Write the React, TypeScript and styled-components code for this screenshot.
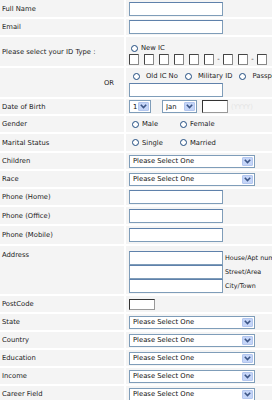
import styled, { createGlobalStyle } from 'styled-components';

const CELL_BG = '#f4f4f4';
const INPUT_BORDER = '#7f9db9';
const RADIO_RING = '#1f4b80';

const GlobalStyle = createGlobalStyle`
  html, body {
    margin: 0;
    padding: 0;
    background: #fff;
    overflow: hidden;
  }
  body {
    font-family: "DejaVu Sans", Verdana, sans-serif;
    font-size: 6.8px;
    color: #222;
  }
`;

const SELECT_ROWS = ['Children', 'Race'];
const PHONE_ROWS = ['Phone (Home)', 'Phone (Office)', 'Phone (Mobile)'];
const LOWER_SELECTS = ['State', 'Country', 'Education', 'Income', 'Career Field'];
const ADDRESS_PARTS = ['House/Apt num', 'Street/Area', 'City/Town'];

const Chevron = () => (
  <svg width='7' height='5' viewBox='0 0 7 5'>
    <path d='M0.8 0.8 L3.5 3.6 L6.2 0.8' fill='none' stroke='#3d5686' strokeWidth='1.6' />
  </svg>
);

const SelectBox = ({ width, value }: { width: number; value: string }) => (
  <StyledSelectWrap style={{ width }}>
    <StyledSelect defaultValue={value}>
      <option>{value}</option>
    </StyledSelect>
    <StyledArrow>
      <Chevron />
    </StyledArrow>
  </StyledSelectWrap>
);

const Radio = ({ label, $w, $gap }: { label: string; $w?: number; $gap?: number }) => (
  <StyledOption $w={$w} $gap={$gap}>
    <StyledRing />
    <span>{label}</span>
  </StyledOption>
);

export default function App() {
  return (
    <>
      <GlobalStyle />
      <StyledForm>
        <StyledRow $h={17}>
          <StyledLabel>Full Name</StyledLabel>
          <StyledField>
            <StyledInput type='text' />
          </StyledField>
        </StyledRow>
        <StyledRow $h={16}>
          <StyledLabel>Email</StyledLabel>
          <StyledField>
            <StyledInput type='text' />
          </StyledField>
        </StyledRow>
        <StyledRow $h={29}>
          <StyledLabel>Please select your ID Type :</StyledLabel>
          <StyledStack $top={7} $gap={2}>
            <StyledRadioLine $indent={2}>
              <Radio label='New IC' />
            </StyledRadioLine>
            <StyledBoxes>
              <StyledBoxGroup>
                {Array.from({ length: 6 }).map((_, i) => (
                  <StyledDigit key={i} />
                ))}
              </StyledBoxGroup>
              <StyledDash>-</StyledDash>
              <StyledBoxGroup>
                <StyledDigit />
                <StyledDigit />
              </StyledBoxGroup>
              <StyledDash>-</StyledDash>
              <StyledBoxGroup>
                <StyledDigit />
                <StyledDigit />
                <StyledDigit />
                <StyledDigit />
              </StyledBoxGroup>
            </StyledBoxes>
          </StyledStack>
        </StyledRow>
        <StyledRow $h={29}>
          <StyledLabel $right>OR</StyledLabel>
          <StyledStack $top={4} $gap={3}>
            <StyledRadioLine $indent={4} $gap={7}>
              <Radio label='Old IC No' $gap={6} />
              <Radio label='Military ID' $gap={6} />
              <Radio label='Passport' $gap={6} />
            </StyledRadioLine>
            <StyledInput type='text' />
          </StyledStack>
        </StyledRow>
        <StyledRow $h={15}>
          <StyledLabel>Date of Birth</StyledLabel>
          <StyledField $gap={11}>
            <SelectBox width={22} value='1' />
            <StyledDobGroup>
              <SelectBox width={35} value='Jan' />
              <StyledYear type='text' />
              <StyledHint>(YYYY)</StyledHint>
            </StyledDobGroup>
          </StyledField>
        </StyledRow>
        <StyledRow $h={16}>
          <StyledLabel>Gender</StyledLabel>
          <StyledRadioLine $indent={6} $cell>
            <Radio label='Male' $w={48} />
            <Radio label='Female' $w={48} />
          </StyledRadioLine>
        </StyledRow>
        <StyledRow $h={17}>
          <StyledLabel>Marital Status</StyledLabel>
          <StyledRadioLine $indent={6} $cell>
            <Radio label='Single' $w={48} />
            <Radio label='Married' $w={48} />
          </StyledRadioLine>
        </StyledRow>
        {SELECT_ROWS.map(name => (
          <StyledRow key={name} $h={16}>
            <StyledLabel>{name}</StyledLabel>
            <StyledField>
              <SelectBox width={126} value='Please Select One' />
            </StyledField>
          </StyledRow>
        ))}
        {PHONE_ROWS.map((name, i) => (
          <StyledRow key={name} $h={16 + i}>
            <StyledLabel>{name}</StyledLabel>
            <StyledField>
              <StyledInput type='text' />
            </StyledField>
          </StyledRow>
        ))}
        <StyledRow $h={48}>
          <StyledLabel $top>Address</StyledLabel>
          <StyledStack $top={5} $gap={0}>
            {ADDRESS_PARTS.map(part => (
              <StyledAddressLine key={part}>
                <StyledInput type='text' />
                <span>{part}</span>
              </StyledAddressLine>
            ))}
          </StyledStack>
        </StyledRow>
        <StyledRow $h={16}>
          <StyledLabel>PostCode</StyledLabel>
          <StyledField>
            <StyledPostCode type='text' />
          </StyledField>
        </StyledRow>
        {LOWER_SELECTS.map(name => (
          <StyledRow key={name} $h={16}>
            <StyledLabel>{name}</StyledLabel>
            <StyledField>
              <SelectBox width={126} value='Please Select One' />
            </StyledField>
          </StyledRow>
        ))}
      </StyledForm>
    </>
  );
}

const StyledForm = styled.div`
  width: 330px;
  display: flex;
  flex-direction: column;
  gap: 2px;
`;

const StyledRow = styled.div<{ $h: number }>`
  height: ${props => props.$h}px;
  display: grid;
  grid-template-columns: 124px 1fr;
  column-gap: 2px;
`;

const StyledLabel = styled.div<{ $top?: boolean; $right?: boolean }>`
  background: ${CELL_BG};
  display: flex;
  align-items: ${props => (props.$top ? 'flex-start' : 'center')};
  justify-content: ${props => (props.$right ? 'flex-end' : 'flex-start')};
  padding: ${props => (props.$top ? '5px' : '0')} ${props => (props.$right ? '10px' : '2px')} 0 2px;
  white-space: nowrap;
`;

const StyledField = styled.div<{ $gap?: number }>`
  background: ${CELL_BG};
  display: flex;
  align-items: center;
  gap: ${props => props.$gap ?? 0}px;
  padding-left: 3px;
`;

const StyledStack = styled.div<{ $top: number; $gap: number }>`
  background: ${CELL_BG};
  display: flex;
  flex-direction: column;
  align-items: flex-start;
  gap: ${props => props.$gap}px;
  padding: ${props => props.$top}px 0 0 3px;
`;

const StyledInput = styled.input`
  box-sizing: border-box;
  width: 94px;
  height: 14px;
  margin: 0;
  padding: 0 2px;
  border: 1px solid ${INPUT_BORDER};
  border-top-color: #5f81ab;
  background: #fff;
  font: inherit;
  outline: none;
`;

const StyledPostCode = styled.input`
  box-sizing: border-box;
  width: 26px;
  height: 11px;
  margin: 0;
  padding: 0;
  border: 1px solid #333;
  border-right-color: #999;
  border-bottom-color: #999;
  background: #fff;
  outline: none;
`;

const StyledYear = styled(StyledPostCode)`
  height: 13px;
  margin-left: 5px;
`;

const StyledHint = styled.span`
  color: #e4e4e4;
  margin-left: 3px;
`;

const StyledDobGroup = styled.div`
  display: flex;
  align-items: center;
`;

const StyledSelectWrap = styled.div`
  box-sizing: border-box;
  height: 13px;
  display: flex;
  align-items: center;
  border: 1px solid ${INPUT_BORDER};
  background: #fff;
  padding-right: 1px;
`;

const StyledSelect = styled.select`
  appearance: none;
  flex: 1;
  min-width: 0;
  height: 100%;
  border: none;
  margin: 0;
  padding: 0 0 0 3px;
  background: transparent;
  font: inherit;
  color: #111;
  outline: none;
`;

const StyledArrow = styled.span`
  box-sizing: border-box;
  width: 11px;
  height: 9px;
  display: grid;
  place-items: center;
  background: #c5d5f8;
  border: 1px solid #b3c6ee;
  border-radius: 1px;
`;

const StyledRadioLine = styled.div<{ $indent?: number; $gap?: number; $cell?: boolean }>`
  background: ${props => (props.$cell ? CELL_BG : 'transparent')};
  display: flex;
  align-items: center;
  gap: ${props => props.$gap ?? 0}px;
  padding-left: ${props => props.$indent ?? 0}px;
`;

const StyledOption = styled.label<{ $w?: number; $gap?: number }>`
  display: flex;
  align-items: center;
  gap: ${props => props.$gap ?? 3}px;
  width: ${props => (props.$w ? `${props.$w}px` : 'auto')};
  white-space: nowrap;
`;

const StyledRing = styled.span`
  box-sizing: border-box;
  width: 7px;
  height: 7px;
  border-radius: 50%;
  border: 1.3px solid ${RADIO_RING};
  background: #fff;
`;

const StyledBoxes = styled.div`
  display: flex;
  align-items: center;
`;

const StyledBoxGroup = styled.div`
  display: flex;
  gap: 5px;
`;

const StyledDigit = styled.span`
  box-sizing: border-box;
  width: 10px;
  height: 11px;
  border: 1px solid #444;
  border-right-color: #888;
  border-bottom-color: #888;
  border-radius: 1px;
  background: #fff;
`;

const StyledDash = styled.span`
  width: 9px;
  text-align: center;
  line-height: 11px;
`;

const StyledAddressLine = styled.div`
  display: flex;
  align-items: center;
  gap: 2px;
  white-space: nowrap;
  font-size: 6.4px;
`;
